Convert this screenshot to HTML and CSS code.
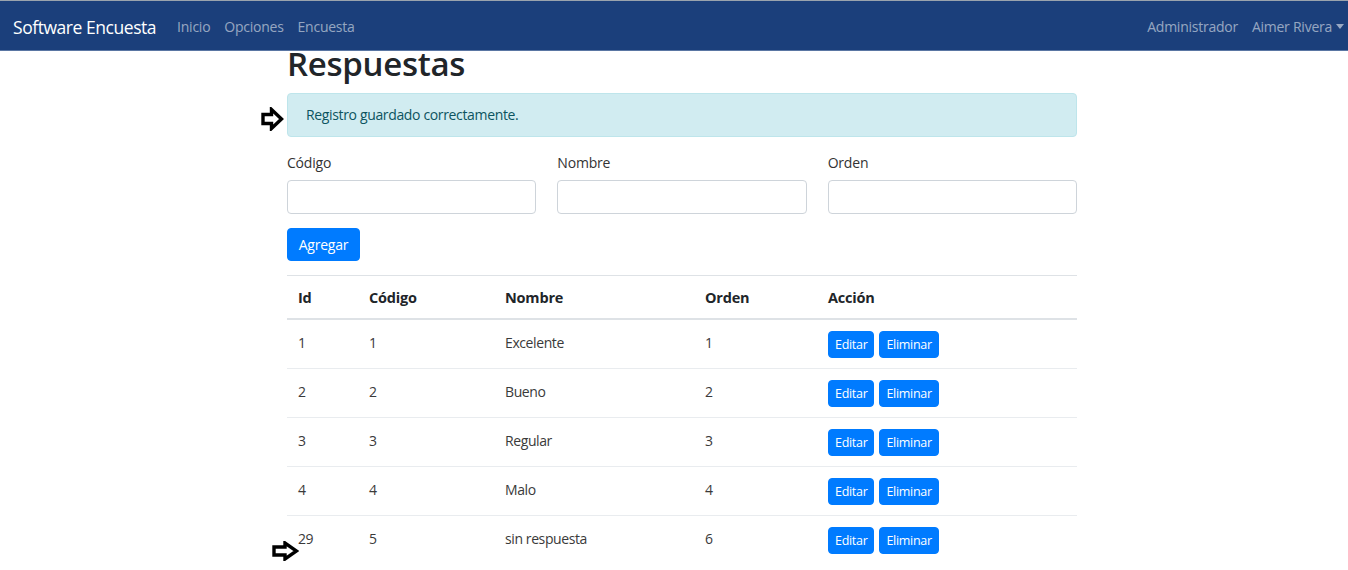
FILE: index.html
```html
<!DOCTYPE html>
<html lang="es">
<head>
<meta charset="utf-8">
<title>Respuestas</title>
<link rel="stylesheet" href="styles.css">
</head>
<body>
<nav class="navbar">
  <div class="nav-left">
    <span class="brand">Software Encuesta</span>
    <a class="nav-link">Inicio</a>
    <a class="nav-link">Opciones</a>
    <a class="nav-link">Encuesta</a>
  </div>
  <div class="nav-right">
    <a class="nav-link">Administrador</a>
    <a class="nav-link dropdown">Aimer Rivera<span class="caret"></span></a>
  </div>
</nav>
<main class="container">
  <h1 class="title">Respuestas</h1>
  <div class="alert">Registro guardado correctamente.</div>
  <div class="form-row">
    <div class="field"><label>Código</label><input type="text"></div>
    <div class="field"><label>Nombre</label><input type="text"></div>
    <div class="field"><label>Orden</label><input type="text"></div>
  </div>
  <button class="btn btn-add">Agregar</button>
  <table class="table">
    <colgroup>
      <col class="c-id"><col class="c-cod"><col class="c-nom"><col class="c-ord"><col class="c-acc">
    </colgroup>
    <thead>
      <tr><th>Id</th><th>Código</th><th>Nombre</th><th>Orden</th><th>Acción</th></tr>
    </thead>
    <tbody>
      <tr><td>1</td><td>1</td><td>Excelente</td><td>1</td><td class="acc"><button class="btn btn-sm">Editar</button><button class="btn btn-sm">Eliminar</button></td></tr>
      <tr><td>2</td><td>2</td><td>Bueno</td><td>2</td><td class="acc"><button class="btn btn-sm">Editar</button><button class="btn btn-sm">Eliminar</button></td></tr>
      <tr><td>3</td><td>3</td><td>Regular</td><td>3</td><td class="acc"><button class="btn btn-sm">Editar</button><button class="btn btn-sm">Eliminar</button></td></tr>
      <tr><td>4</td><td>4</td><td>Malo</td><td>4</td><td class="acc"><button class="btn btn-sm">Editar</button><button class="btn btn-sm">Eliminar</button></td></tr>
      <tr><td>29</td><td>5</td><td>sin respuesta</td><td>6</td><td class="acc"><button class="btn btn-sm">Editar</button><button class="btn btn-sm">Eliminar</button></td></tr>
    </tbody>
  </table>
</main>
<svg class="pointer pointer-1" width="23" height="24" viewBox="0 0 23 24"><path d="M2 7.5 H10.5 V2.5 L20.5 12 L10.5 21.5 V16.5 H2 Z" fill="#fff" stroke="#000" stroke-width="3.4" stroke-linejoin="miter"/></svg>
<svg class="pointer pointer-2" width="27" height="20" viewBox="0 0 27 20"><path d="M2 6 H13 V2 L24.5 10 L13 18 V14 H2 Z" fill="#fff" stroke="#000" stroke-width="3.4" stroke-linejoin="miter"/></svg>
</body>
</html>
```
FILE: styles.css
```css
* { box-sizing: border-box; }
html, body { margin: 0; padding: 0; }
body {
  font-family: "Open Sans", "Noto Sans", sans-serif;
  font-size: 14px;
  line-height: 24px;
  color: #212529;
  background: #fff;
  position: relative;
  overflow: hidden;
  height: 570px;
}
.navbar {
  height: 51px;
  background: #1b3f7b;
  border-top: 1px solid #9aa3ad;
  border-bottom: 1px solid #5a76a3;
  display: flex;
  justify-content: space-between;
  align-items: center;
  padding: 2px 4px 0 13px;
}
.nav-left, .nav-right { display: flex; align-items: center; }
.brand {
  color: #fff;
  font-size: 17.5px;
  letter-spacing: -0.45px;
  margin-right: 21px;
}
.nav-link {
  color: rgba(255,255,255,.55);
  font-size: 14px;
  letter-spacing: -0.25px;
  margin-right: 14px;
}
.nav-right .nav-link:last-child { margin-right: 0; }
.caret {
  display: inline-block;
  margin-left: 4px;
  vertical-align: 3px;
  border-top: 5px solid rgba(255,255,255,.55);
  border-left: 4px solid transparent;
  border-right: 4px solid transparent;
}
.container {
  width: 790px;
  margin-left: calc(50% - 387px);
}
.title {
  font-size: 33px;
  font-weight: 600;
  line-height: 26px;
  height: 30px;
  margin: 0 0 12px;
  padding: 0;
  letter-spacing: -0.3px;
}
.alert {
  height: 44px;
  background: #d1ecf1;
  border: 1px solid #bee5eb;
  color: #0c5460;
  border-radius: 4px;
  padding: 10px 18px;
  font-size: 14px;
  letter-spacing: -0.35px;
  line-height: 22px;
  margin-bottom: 14px;
}
.form-row {
  display: grid;
  grid-template-columns: repeat(3, 1fr);
  column-gap: 21px;
  margin-bottom: 14px;
}
.field label {
  display: block;
  font-size: 14px;
  letter-spacing: -0.2px;
  line-height: 24px;
  color: #333;
  margin-bottom: 5px;
}
.field input {
  display: block;
  width: 100%;
  height: 34px;
  border: 1px solid #ced4da;
  border-radius: 4px;
  background: #fff;
}
.btn {
  font-family: inherit;
  background: #007bff;
  border: 1px solid #007bff;
  color: #fff;
  border-radius: 4px;
  cursor: pointer;
}
.btn-add {
  display: block;
  width: 73px;
  height: 33px;
  padding: 0;
  font-size: 14px;
  letter-spacing: -0.2px;
  margin-bottom: 14px;
}
.table {
  width: 100%;
  border-collapse: collapse;
  border-top: 1px solid #dee2e6;
  font-size: 14px;
}
.c-id { width: 71px; }
.c-cod { width: 136px; }
.c-nom { width: 200px; }
.c-ord { width: 123px; }
.table th {
  text-align: left;
  font-weight: 700;
  font-size: 14.5px;
  letter-spacing: -0.2px;
  padding: 11px 11px 9px;
  line-height: 22px;
  border-bottom: 2px solid #dee2e6;
}
.table td {
  padding: 12px 11px 9px;
  line-height: 22px;
  letter-spacing: -0.4px;
  vertical-align: top;
  color: #3a3a3a;
  border-top: 1px solid #e9ecef;
}
.table td.acc { line-height: 0; padding-top: 11px; padding-bottom: 10px; }
.btn-sm {
  height: 27px;
  padding: 0 6px;
  font-size: 12.5px;
  letter-spacing: -0.3px;
  line-height: 25px;
  margin-right: 5px;
  vertical-align: top;
}
.pointer { position: absolute; }
.pointer-1 { left: 261px; top: 107px; }
.pointer-2 { left: 272px; top: 541px; }
```
